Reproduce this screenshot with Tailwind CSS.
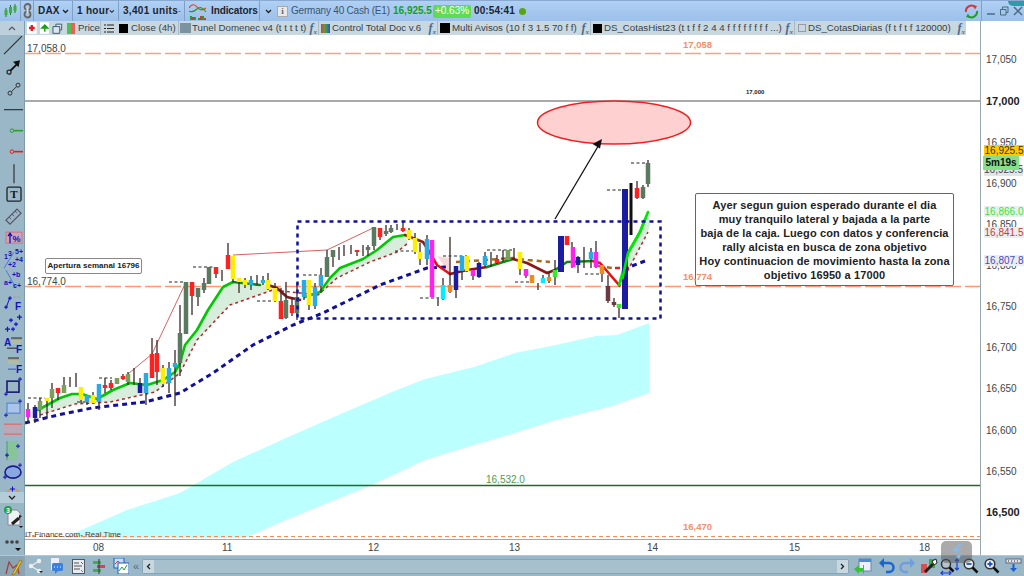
<!DOCTYPE html>
<html>
<head>
<meta charset="utf-8">
<script src="https://cdn.jsdelivr.net/npm/@tailwindcss/browser@4"></script>
</head>
<body class="bg-white">
<div class="relative w-[1024px] h-[576px] overflow-hidden flex flex-col bg-white font-['Liberation_Sans',Arial,sans-serif] text-[10px] leading-none text-[#333]">

  <!-- top bar -->
  <div class="relative h-[21px] shrink-0 flex items-center bg-gradient-to-b from-[#b0d0f4] to-[#9cc0ea] border-t border-[#8aa9d0] text-[#1c2530] whitespace-nowrap">
    <div class="w-[21px] h-full flex items-center justify-center border-r border-[#7f9fc4]">
      <svg width="13" height="14" viewBox="0 0 13 14"><path d="M2 4v9M6.500 1v10M11 0v9" stroke="#1f7a2c"/><path d="M2 6v5M6.500 3v6M11 2v5" stroke="#3fae3f" stroke-width="3"/></svg>
    </div>
    <div class="w-[13px] h-full flex items-center justify-center border-r border-[#7f9fc4]">
      <svg width="9" height="16" viewBox="0 0 9 16"><circle cx="4.500" cy="4" r="3" fill="none" stroke="#666" stroke-width="1.800"/><circle cx="4.500" cy="11.500" r="3" fill="none" stroke="#666" stroke-width="1.800"/><path d="M4.500 5v5" stroke="#ddd" stroke-width="2"/></svg>
    </div>
    <div class="w-[39px] h-full flex items-center justify-between pl-[4px] pr-[3px] border-r border-[#7f9fc4]"><b class="tracking-[0.2px]">DAX</b><svg width="7" height="5" viewBox="0 0 7 5"><path d="M1 1l2.500 2.500L6 1" fill="none" stroke="#222" stroke-width="1.300"/></svg></div>
    <div class="w-[46px] h-full flex items-center justify-between pl-[4px] pr-[3px] border-r border-[#7f9fc4]"><b class="tracking-[0.3px]">1 hour</b><svg width="7" height="5" viewBox="0 0 7 5"><path d="M1 1l2.500 2.500L6 1" fill="none" stroke="#222" stroke-width="1.300"/></svg></div>
    <div class="w-[66px] h-full flex items-center justify-between pl-[4px] pr-[3px] border-r border-[#7f9fc4]"><b class="tracking-[0.3px]">3,401 units</b><svg width="7" height="5" viewBox="0 0 7 5"><path d="M1 1l2.500 2.500L6 1" fill="none" stroke="#222" stroke-width="1.300"/></svg></div>
    <div class="w-[75px] h-full flex items-center gap-[4px] pl-[4px] border-r border-[#7f9fc4]">
      <svg width="18" height="17" viewBox="0 0 18 17"><path d="M0 5q4-6 8-1t9 1" fill="none" stroke="#e23a2a" stroke-width="1.200"/><path d="M0 8q4 2 8-2t9 3" fill="none" stroke="#2a9a2a" stroke-width="1.200"/><path d="M1 17v-4h2v4zM5 17v-3h2v3zM9 17v-2h2v2zM13 17v-4h2v4z" fill="#1f9f2f"/><path d="M3 17v-3h2v3zM11 17v-4h2v4zM15 17v-2h2v2z" fill="#e03030"/></svg>
      <b class="tracking-[-0.1px]">Indicators</b>
    </div>
    <div class="w-[16px] h-full flex items-center justify-center"><svg width="7" height="5" viewBox="0 0 7 5"><path d="M1 1l2.500 2.500L6 1" fill="none" stroke="#222" stroke-width="1.300"/></svg></div>
    <div class="w-[11px] h-[11px] ml-[1px] flex items-center justify-center bg-[#e8e8e8] border border-[#aaa] text-[#666] font-bold font-['Liberation_Serif',serif] text-[9px]">i</div>
    <span class="ml-[3px] text-[#3a5570] tracking-[-0.2px] w-[102px] whitespace-nowrap">Germany 40 Cash (E1)</span>
    <b class="text-[#17a017] w-[40px]">16,925.5</b>
    <span class="w-[38px] h-[13px] bg-[#5fdc55] rounded-[2px] text-white flex items-center justify-center">+0.63%</span>
    <b class="ml-[3px] tracking-[0.1px] w-[44px]">00:54:41</b>
    <span class="ml-[1px] w-[7px] h-[7px] rounded-full bg-[#5aa50f]"></span>
    <div class="absolute right-[43px] top-0 h-full w-[19px] flex items-center justify-center">
      <svg width="15" height="15" viewBox="0 0 15 15"><path d="M2 8a5.500 5.500 0 0 1 9-5" fill="none" stroke="#e03030" stroke-width="2"/><path d="M9 1l4 1-2 3.500z" fill="#e03030"/><path d="M13 7a5.500 5.500 0 0 1-9 5" fill="none" stroke="#1fa01f" stroke-width="2"/><path d="M6 14l-4-1 2-3.500z" fill="#1fa01f"/></svg>
    </div>
    <div class="absolute right-0 top-0 h-full w-[43px] flex items-center gap-[3px] pl-[4px] border-l border-[#7f9fc4]">
      <svg width="10" height="10" viewBox="0 0 10 10"><path d="M1 8h8" stroke="#4a6a80" stroke-width="1.500"/></svg>
      <svg width="10" height="10" viewBox="0 0 10 10"><path d="M1.500 3.500h5.500v5.500h-5.500zM3.500 3V1h5.500v5.500h-2" fill="none" stroke="#4a6a80"/></svg>
      <svg width="12" height="12" viewBox="0 0 12 12"><path d="M2 2l8 8M10 2l-8 8" stroke="#4a6a80" stroke-width="1.500"/></svg>
    </div>
    <div class="absolute right-0 top-0 w-[16px] h-[5px] rounded-bl-[12px] bg-[#2f9aa8]"></div>
  </div>

  <!-- middle -->
  <div class="flex flex-1 min-h-0">
    <!-- left toolbar -->
    <div class="w-[25px] shrink-0 flex flex-col bg-[#9ab7c8] border-r border-[#7f9aab]">
      <div class="h-[14px] shrink-0 flex items-center justify-center bg-[#bcd0dc]"><svg width="8" height="5" viewBox="0 0 8 5"><path d="M1 4l3-3 3 3" fill="none" stroke="#556" stroke-width="1.200"/></svg></div>
      <div class="flex-1 min-h-0 flex flex-col items-center overflow-hidden [&>svg]:shrink-0">
        <svg width="22" height="21.300" viewBox="0 0 22 21"><path d="M3 19L21 1" stroke="#333" stroke-width="1.200"/></svg>
        <svg width="22" height="21.300" viewBox="0 0 22 21"><circle cx="8" cy="16" r="2" fill="none" stroke="#222" stroke-width="1.200"/><path d="M9.500 14.500l7-7" stroke="#111" stroke-width="2"/><path d="M19 4l-1.500 7-5.500-5.500z" fill="#111"/></svg>
        <svg width="22" height="21.300" viewBox="0 0 22 21"><circle cx="9" cy="15" r="2" fill="none" stroke="#333"/><circle cx="17" cy="7" r="2" fill="none" stroke="#333"/><path d="M10.500 13.500l5-5" stroke="#333"/></svg>
        <svg width="22" height="21.300" viewBox="0 0 22 21"><path d="M3 10.500h19" stroke="#333" stroke-width="1.200"/></svg>
        <svg width="22" height="21.300" viewBox="0 0 22 21"><circle cx="11" cy="10.500" r="1.800" fill="none" stroke="#2aa02a"/><path d="M13 10.500h9" stroke="#2aa02a" stroke-width="1.600"/></svg>
        <svg width="22" height="21.300" viewBox="0 0 22 21"><circle cx="11" cy="10.500" r="1.800" fill="none" stroke="#e02020"/><path d="M13 10.500h9" stroke="#e02020" stroke-width="1.600"/></svg>
        <svg width="22" height="21.300" viewBox="0 0 22 21"><path d="M13 1v19" stroke="#333" stroke-width="1.200"/></svg>
        <svg width="22" height="21.300" viewBox="0 0 22 21"><rect x="6" y="3" width="14" height="14" rx="1.500" fill="none" stroke="#222" stroke-width="1.300"/><text x="13" y="14" font-size="11" font-weight="700" text-anchor="middle" fill="#111" font-family="Liberation Serif">T</text></svg>
        <svg width="22" height="21.300" viewBox="0 0 22 21"><path d="M5 15L16 4l4 4L9 19z" fill="none" stroke="#556" stroke-width="1.200"/><path d="M8 12l2 2M11 9l2 2M14 6l2 2" stroke="#556"/></svg>
        <svg width="22" height="21.300" viewBox="0 0 22 21"><rect x="5" y="5" width="16" height="11" fill="#c8a8b8" stroke="#d87080"/><path d="M9 16V7M7 9l2-3 2 3" fill="none" stroke="#1212c0" stroke-width="1.300"/><text x="15.500" y="14.500" font-size="9" font-weight="700" text-anchor="middle" fill="#1212c0">%</text></svg>
        <svg width="22" height="21.300" viewBox="0 0 22 21"><path d="M3 20l10-16" stroke="#5577cc"/><text x="3" y="11" font-size="7" font-weight="700" fill="#1212c0">1</text><text x="7" y="8" font-size="7" font-weight="700" fill="#1212c0">3</text><text x="14" y="6" font-size="7" font-weight="700" fill="#1212c0">5+</text><text x="14" y="14" font-size="7" font-weight="700" fill="#1212c0">+4</text><text x="7" y="19" font-size="7" font-weight="700" fill="#1212c0">+2</text></svg>
        <svg width="22" height="21.300" viewBox="0 0 22 21"><path d="M5 1l10 18" stroke="#5577cc"/><text x="3" y="16" font-size="7" font-weight="700" fill="#1212c0">a+</text><text x="11" y="8" font-size="7" font-weight="700" fill="#1212c0">+b</text><text x="12" y="19" font-size="7" font-weight="700" fill="#1212c0">c+</text></svg>
        <svg width="22" height="21.300" viewBox="0 0 22 21"><path d="M5 17L9 6" stroke="#1212c0"/><path d="M12 6h7" stroke="#d88" stroke-dasharray="3 1"/><text x="14" y="19" font-size="10" font-weight="700" fill="#1212c0">F</text><path d="M3 16h4M5 14v4M7 7h4M9 5v4" stroke="#1212c0"/></svg>
        <svg width="22" height="21.300" viewBox="0 0 22 21"><path d="M4 17h5M6.500 14.500v5M8 8h4M10 6v4M13 12h4M15 10v4M16 5h5M18.500 2.500v5M10 17h4M12 15v4" stroke="#1212c0" stroke-width="1.200"/></svg>
        <svg width="22" height="21.300" viewBox="0 0 22 21"><text x="3" y="13" font-size="10" font-weight="700" fill="#1212c0">A</text><path d="M10 5h11" stroke="#666" stroke-width="2"/><path d="M10 8h10M10 10h10" stroke="#d8c060"/><path d="M6 15h10" stroke="#222"/><text x="15" y="20" font-size="10" font-weight="700" fill="#1212c0">F</text></svg>
        <svg width="22" height="21.300" viewBox="0 0 22 21"><path d="M7 4h11" stroke="#666" stroke-width="2"/><path d="M7 7h11M7 9h11" stroke="#d8c060"/><path d="M7 15h8" stroke="#3355cc"/><text x="15" y="19" font-size="10" font-weight="700" fill="#1212c0">F</text></svg>
        <svg width="22" height="21.300" viewBox="0 0 22 21"><rect x="6" y="5" width="12" height="11" fill="none" stroke="#1a1a70" stroke-width="1.600"/><path d="M3 18h4M5 16v4M17 3h4M19 1v4" stroke="#1212c0"/></svg>
        <svg width="22" height="21.300" viewBox="0 0 22 21"><rect x="6" y="6" width="13" height="10" fill="#a8c4e8" stroke="#4a7ae0"/><path d="M3 18h4M5 16v4M17 4h4M19 2v4" stroke="#1212c0"/></svg>
        <svg width="22" height="21.300" viewBox="0 0 22 21"><rect x="3" y="6" width="18" height="10" fill="#b8a8b8"/><path d="M3 6h18" stroke="#e06060"/><path d="M3 16h18" stroke="#e06060"/></svg>
        <svg width="22" height="21.300" viewBox="0 0 22 21"><rect x="6" y="1" width="11" height="19" fill="#86c49a"/><path d="M6 1v19" stroke="#4a9a6a"/><path d="M15 6h4M17 4v4M4 15h4M6 13v4" stroke="#1212c0"/></svg>
        <svg width="22" height="21.300" viewBox="0 0 22 21"><ellipse cx="12" cy="11" rx="8" ry="6" fill="#8aa8e0" stroke="#1a1a90" stroke-width="1.600"/><path d="M17 4h4M19 2v4M2 16h4M4 14v4" stroke="#1212c0"/></svg>
        <svg width="22" height="10" viewBox="0 0 22 10"><path d="M5 14a7 7 0 0 1 14 0" fill="none" stroke="#e09060" stroke-width="1.500"/><path d="M9 7h5M11.500 4.500v5" stroke="#1212c0"/></svg>
        <div class="h-[11px] w-full shrink-0 flex items-center justify-center bg-[#b4ccd8]"><svg width="8" height="5" viewBox="0 0 8 5"><path d="M1 1l3 3 3-3" fill="none" stroke="#222" stroke-width="1.300"/></svg></div>
        <svg class="mt-[1px]" width="24" height="26" viewBox="0 0 24 26"><path d="M8 6h9l3 3v12H8z" fill="#eef2f5" stroke="#889"/><circle cx="8" cy="6" r="4" fill="#1f9f3f"/><text x="8" y="9" font-size="7" font-weight="700" text-anchor="middle" fill="#fff">3</text><path d="M12 20l7-6" stroke="#222" stroke-width="3"/><path d="M19 11l3 1-3 3z" fill="#222"/><path d="M19 22l2 2 2-2z" fill="#111"/></svg>
        <svg class="mt-[8px]" width="24" height="13" viewBox="0 0 24 13"><circle cx="7" cy="4" r="1.800" fill="#444"/><circle cx="12" cy="4" r="1.800" fill="#444"/><circle cx="17" cy="4" r="1.800" fill="#444"/><path d="M15 10h6l-3 3z" fill="#111"/></svg>
      </div>
    </div>

    <!-- chart column -->
    <div class="flex-1 min-w-0 flex flex-col">
      <div class="h-[14px] shrink-0 flex items-center bg-white text-[#33424d] text-[9.7px] whitespace-nowrap">
        <div class="h-full w-[941px] flex items-center bg-[#c9d7df]">
          <div class="w-[76px] h-full flex items-center gap-[3px] pl-[2px] border-r border-[#a8bac6]">
            <svg width="10" height="12" viewBox="0 0 10 12"><rect width="10" height="12" fill="#fff"/><path d="M5 3v6M2 6h6" stroke="#e02020" stroke-width="2.500"/></svg>
            <svg width="10" height="12" viewBox="0 0 10 12"><rect width="10" height="12" fill="#fff"/><path d="M5 10V5M2 6l3-3 3 3z" stroke="#18a018" fill="#18a018" stroke-width="1.500"/></svg>
            <svg width="11" height="11" viewBox="0 0 11 11"><path d="M4 3V1h6v6H8M1 3.500h7v7H1z" fill="#dce6ec" stroke="#3a5a78"/></svg>
            <span class="ml-[1px] w-[8px] h-[11px] bg-gradient-to-r from-[#4fbf4f] from-50% to-[#e8605a] to-50% shrink-0"></span>
            <span>Price</span>
          </div>
          <div class="w-[78px] h-full flex items-center pl-[3px] border-r border-[#a8bac6]">
            <svg width="10" height="9" viewBox="0 0 10 9"><path d="M3 1h7M3 4.500h7M3 8h7M0 1h2M0 4.500h2M0 8h2" stroke="#222" stroke-width="1.200"/></svg>
            <span class="ml-[5px] w-[9px] h-[9px] bg-black shrink-0"></span>
            <span class="ml-[3px]">Close (4h)</span>
          </div>
          <div class="w-[140px] h-full flex items-center pl-[1px] pr-[1px] border-r border-[#a8bac6]">
            <span class="w-[11px] h-[10px] bg-[#7c939f] shrink-0"></span>
            <span class="ml-[1px] shrink-0">Tunel Domenec v4 (t t t t t)</span>
            <i class="ml-auto font-['Liberation_Serif',serif] font-bold text-[12px] text-[#456a94]">f<sub class="text-[7px]">x</sub></i>
          </div>
          <div class="w-[119px] h-full flex items-center pl-[2px] pr-[1px] border-r border-[#a8bac6]">
            <span class="w-[9px] h-[9px] bg-gradient-to-r from-[#c04040] via-[#40a040] to-[#4040c0] shrink-0"></span>
            <span class="ml-[2px] shrink-0">Control Total Doc v.6</span>
            <i class="ml-auto font-['Liberation_Serif',serif] font-bold text-[12px] text-[#456a94]">f<sub class="text-[7px]">x</sub></i>
          </div>
          <div class="w-[153px] h-full flex items-center pl-[2px] pr-[1px] border-r border-[#a8bac6]">
            <span class="w-[10px] h-[10px] bg-black shrink-0"></span>
            <span class="ml-[2px] shrink-0">Multi Avisos (10 f 3 1.5 70 f f)</span>
            <i class="ml-auto font-['Liberation_Serif',serif] font-bold text-[12px] text-[#456a94]">f<sub class="text-[7px]">x</sub></i>
          </div>
          <div class="w-[204px] h-full flex items-center pl-[2px] pr-[1px] border-r border-[#a8bac6]">
            <span class="w-[9px] h-[9px] bg-black shrink-0"></span>
            <span class="ml-[2px] shrink-0">DS_CotasHist23 (t t f f 2 4 4 f f f f f f f f ...)</span>
            <i class="ml-auto font-['Liberation_Serif',serif] font-bold text-[12px] text-[#456a94]">f<sub class="text-[7px]">x</sub></i>
          </div>
          <div class="flex-1 h-full flex items-center pl-[3px] pr-[1px]">
            <span class="w-[8px] h-[8px] border border-[#99a] shrink-0"></span>
            <span class="ml-[2px] shrink-0">DS_CotasDiarias (f t f t f 120000)</span>
            <i class="ml-auto font-['Liberation_Serif',serif] font-bold text-[12px] text-[#456a94]">f<sub class="text-[7px]">x</sub></i>
          </div>
        </div>
      </div>

      <!-- chart canvas -->
      <div class="relative flex-1 min-h-0 bg-white border-b border-[#9aa8b0]">
        <svg class="absolute inset-0" width="955" height="505" viewBox="25 35 955 505" fill="none">
          <polygon fill="#bcffff" points="70,535 127,510 180,493 233,462 286,438 343,413 392,392 425,379 474,367 515,353 556,345 596,336 617,335 649,323 649,393 609,407 556,420 515,433 474,445 425,460 372,485 335,500 286,520 245,538 62,538"/>
          <path d="M25 53.500H980" stroke="#f9a27c" stroke-width="1.500" stroke-dasharray="16 4"/>
          <path d="M25 101H980" stroke="#555"/>
          <path d="M25 286.500H980" stroke="#fb9a6c" stroke-width="1.500" stroke-dasharray="16 4"/>
          <path d="M25 485.500H980" stroke="#1a6f1a" stroke-width="1.500"/>
          <path d="M25 536.500H980" stroke="#f58a5c" stroke-dasharray="4 3"/>
          <ellipse cx="614" cy="122.500" rx="76.500" ry="21.500" fill="#ffd0d0" stroke="#f02020" stroke-width="1.500"/>
          <path d="M555 219L600 143" stroke="#111" stroke-width="1.300"/>
          <path d="M602 139l-9.500 5 7.500 4.500z" fill="#111"/>
          <!-- thin red trail -->
          <path d="M128 374L152 354L186 282M233 255L327 250L373 228" stroke="#d86060" stroke-width="1"/>
          <!-- shaded MA band -->
          <path d="M38 410L60 398L72 394L82 394L97 399L113 390L130 383L147 385L163 380L175 372L180 363L185 345L197 330L208 310L223 287L233 282L268 285L277 288L287 297L300 300L320 292L330 278L340 268L363 259L377 250L393 237L405 235L408 243L397 252L370 262L337 278L318 295L290 300L273 290L230 305L197 340L180 373L155 392L110 402L75 404L40 415Z" fill="#d8eedc"/>
          <path d="M619 285L628 253L648 212L650 225L648 232L627 272Z" fill="#d8eedc"/>
          <path d="M437 256L450 258L450 274Z" fill="#f8d8d8"/>
          <!-- red dashed lower -->
          <path d="M40 415L75 404L110 402L155 392L180 373L197 340L230 305L273 290L318 295L337 278L370 262L397 252L408 243M619 287L627 272L648 232" stroke="#b02a2a" stroke-width="1.500" stroke-dasharray="3 3"/>
          <!-- horizontal black dashes -->
          <path d="M28 398H45M77 402H88M99 378H112M169 282H185M193 267H213M257 301H273M303 275H320M395 251H413M420 298H437M443 256H467M487 250H513M515 282H533M585 274H600M607 190H623M631 163H647" stroke="#222" stroke-dasharray="3 2.500"/>
          <!-- navy dashed -->
          <path d="M25 423L58 415L92 408L145 402L180 393L213 373L253 345L293 325L323 313L380 285L427 268L447 267" stroke="#10109a" stroke-width="3" stroke-dasharray="5 4"/>
          <path d="M456 262L513 258L528 260L550 262M598 266L612 268" stroke="#a86a18" stroke-width="2.500" stroke-dasharray="5 4"/>
          <path d="M615 268H632" stroke="#e02020" stroke-width="2.500" stroke-dasharray="5 4"/>
          <path d="M632 266L645 261" stroke="#10109a" stroke-width="3" stroke-dasharray="5 4"/>
          <!-- MA coloured -->
          <g stroke-width="2.600" stroke-linejoin="round" stroke-linecap="round">
            <path stroke="#00c800" d="M38 410L60 398L72 394L82 394L97 399L113 390L130 383L147 385L163 380L175 372L180 363L185 345L197 330L208 310L223 287L233 282"/>
            <path stroke="#108a10" d="M233 282L260 285"/>
            <path stroke="#8a1515" d="M268 285L277 288L287 297L300 300"/>
            <path stroke="#00c800" d="M305 297L320 292L330 278L340 268L363 259L377 250L393 237L405 235"/>
            <path stroke="#8a2015" d="M405 235L423 242L430 253"/>
            <path stroke="#e81010" d="M430 253L437 265L450 274"/>
            <path stroke="#8a1515" d="M450 274L467 270L487 267"/>
            <path stroke="#108a10" d="M487 267L513 259"/>
            <path stroke="#8a1515" d="M513 259L527 263L547 273L555 270"/>
            <path stroke="#108a10" d="M555 270L567 262L593 261"/>
            <path stroke="#e81010" d="M593 261L600 263L619 285"/>
            <path stroke="#00e800" d="M619 285L628 253L640 232L648 212"/>
          </g>
          <!-- wicks -->
          <g stroke="#3a2a2a" stroke-width="1.300">
            <path d="M28 403V423M35 405V423M40 398V418M47 398V418M52 383V408M58 388V400M64 377V393M70 377V387M76 373V387M81 387V403M87 395V405M93 392V404M99 384V410M105 378V393M111 380V390M117 378V384M123 374V380M128 372V385M134 368V385M140 378V393M146 373V405M152 338V378M157 340V385M163 365V387M169 362V393M175 350V406M180 305V376M186 282V334M192 282V315M198 288V306M204 278V293M209 267V284M216 267V278M222 270V281M228 243V269M233 256V282M239 278V293M245 278V288M251 276V290M257 275V285M263 276V285M268 273V290M275 283V302M281 288V319M286 282V319M292 297V316M297 283V320M304 280V300M309 280V310M315 283V309M321 268V293M327 250V277M333 250V267M339 247V260M344 245V256M351 245V254M357 250V256M363 245V256M368 245V256M374 227V250M380 228V240M386 225V236M391 225V233M397 224V230M403 222V232M409 228V240M415 233V254M420 243V265M427 235V265M438 297V306M443 278V300M450 237V293M456 266V298M462 256V280M467 256V272M473 270V280M479 262V278M485 252V266M491 252V267M497 255V264M503 250V262M508 250V260M514 248V258M520 252V275M526 269V278M532 275V283M538 283V290M543 275V283M549 272V283M555 260V285M572 242V268M578 256V273M584 247V268M591 248V268M596 241V268M602 265V282M608 275V303M614 298V307M619 308V318M637 181V199M643 185V199M648 160V187" />
          </g>
          <!-- bodies -->
          <g stroke-width="4.500">
            <path stroke="#ff22ee" d="M28 409V417M432 240V297M526 269V276M573 247V267M596 252V267M473 270V276"/>
            <path stroke="#1c1ca0" d="M35 407V418M140 383V393M456 266V290M479 263V277M578 257V265"/>
            <path stroke="#7ba05b" d="M40 401V410M52 389V398M64 385V393M117 378V384M128 374V382M508 250V260"/>
            <path stroke="#ffee00" d="M47 398V401M81 387V400M93 395V403M163 368V384M233 256V279M239 278V282M245 280V285M268 280V289M275 288V301M309 280V305M409 230V239M415 238V252M420 252V259M467 256V271M520 252V269"/>
            <path stroke="#ff2020" d="M58 388V393M105 385V388M111 383V388M123 376V379M152 354V378M157 353V372M192 282V296M216 267V274M228 255V269M281 301V319M292 305V313M357 250V252M380 228V237M403 228V231M497 259V263M567 236V245M637 188V198"/>
            <path stroke="#29abe2" d="M87 395V402M99 384V402M146 373V393M169 368V383M175 363V367M251 280V285M263 280V283M304 280V297M315 287V306M321 275V286M427 239V259M462 256V271M485 256V265M591 252V259"/>
            <path stroke="#5a7a60" d="M180 333V363M186 282V334M198 288V297M204 283V290M209 267V284M286 300V318M297 297V313M327 257V277M333 250V257M368 247V250M374 227V246M386 231V234M391 228V232"/>
            <path stroke="#00eeff" d="M443 285V299M543 278V283"/>
            <path stroke="#f08a1c" d="M450 285V292M532 275V283M549 277V281M602 265V274"/>
            <path stroke="#33ee22" d="M555 270V277M619 304V308"/>
            <path stroke="#6b3a42" d="M608 286V301M614 302V305"/>
            <path stroke="#1c1ca0" stroke-width="6" d="M561 236V272M625 189V309"/>
            <path stroke="#5a7a60" d="M643 187V198M648 163V184"/>
          </g>
          <path d="M631 183V235" stroke="#111" stroke-width="3"/>
          <path d="M621 285L628 253L640 232L648 212" stroke="#00e800" stroke-width="2.600" stroke-linejoin="round" stroke-dasharray="0 6 60"/>
          <!-- dotted box -->
          <rect x="297.500" y="221.500" width="363" height="97" stroke="#10109a" stroke-width="2.500" stroke-dasharray="4 4"/>
        </svg>

        <!-- chart labels -->
        <span class="absolute left-[2px] top-[9px] text-[#444]">17,058.0</span>
        <span class="absolute left-[658px] top-[5px] font-bold text-[9.5px] text-[#f5906a]">17,058</span>
        <span class="absolute left-[721px] top-[54px] font-bold text-[6px] text-[#222]">17,000</span>
        <span class="absolute left-[2px] top-[242px] text-[#444]">16,774.0</span>
        <span class="absolute left-[461px] top-[440px] text-[#4f9a4f]">16,532.0</span>
        <span class="absolute left-[658px] top-[487px] font-bold text-[9.5px] text-[#f5906a]">16,470</span>
        <span class="absolute left-[0px] top-[496px] text-[8px] text-[#5a3a2a]">IT-Finance.com- Real Time</span>
        <div class="absolute left-[20px] top-[223px] w-[97px] h-[16px] bg-white border border-[#888] rounded-[2px] flex items-center justify-center font-bold text-[8px] text-[#222]">Apertura semanal 16796</div>
        <div class="absolute left-[670px] top-[158px] w-[259px] h-[93px] bg-white border border-[#666] rounded-[2px] flex flex-col justify-center text-center font-bold text-[11px] tracking-[0.12px] leading-[14px] text-[#222] whitespace-nowrap">
          <p>Ayer segun guion esperado durante el dia</p>
          <p>muy tranquilo lateral y bajada a la parte</p>
          <p>baja de la caja. Luego con datos y conferencia</p>
          <p>rally alcista en busca de zona objetivo</p>
          <p>Hoy continuacion de movimiento hasta la zona</p>
          <p>objetivo 16950 a 17000</p>
        </div>
        <span class="absolute left-[658px] top-[237px] font-bold text-[9.5px] text-[#f5906a]">16,774</span>
      </div>

      <!-- time axis -->
      <div class="relative h-[15px] shrink-0 bg-white text-[#444] text-[10px]">
        <span class="absolute left-[68px] top-[3px]">08</span>
        <span class="absolute left-[197px] top-[3px]">11</span>
        <span class="absolute left-[343px] top-[3px]">12</span>
        <span class="absolute left-[484px] top-[3px]">13</span>
        <span class="absolute left-[622px] top-[3px]">14</span>
        <span class="absolute left-[764px] top-[3px]">15</span>
        <span class="absolute left-[894px] top-[3px]">18</span>
      </div>
    </div>

    <!-- right axis -->
    <div class="relative w-[44px] shrink-0 bg-white border-l border-[#9aa8b0] text-[#444]">
      <span class="absolute left-[5px] top-[34px]">17,050</span>
      <b class="absolute left-[5px] top-[75px] text-[11px] text-[#222]">17,000</b>
      <span class="absolute left-[5px] top-[117px]">16,950</span>
      <span class="absolute left-[3px] top-[144px] w-[39px] h-[11px] bg-[#dfe5e8] text-center">16,925.5</span>
      <span class="absolute left-[5px] top-[158px]">16,900</span>
      <span class="absolute left-[5px] top-[199px]">16,850</span>
      <span class="absolute left-[5px] top-[240px]">16,800</span>
      <span class="absolute left-[5px] top-[281px]">16,750</span>
      <span class="absolute left-[5px] top-[322px]">16,700</span>
      <span class="absolute left-[5px] top-[363px]">16,650</span>
      <span class="absolute left-[5px] top-[405px]">16,600</span>
      <span class="absolute left-[5px] top-[446px]">16,550</span>
      <b class="absolute left-[5px] top-[486px] text-[11px] text-[#222]">16,500</b>
      <span class="absolute left-[3px] top-[124px] w-[40px] h-[11px] bg-[#ffc800] flex items-center justify-center text-[#333]">16,925.5</span>
      <b class="absolute left-[2px] top-[135px] w-[36px] h-[14px] bg-[#86e08a] flex items-center justify-center text-[#111] text-[10px]">5m19s</b>
      <span class="absolute left-[3px] top-[185px] w-[40px] h-[11px] bg-[#eaeef0] flex items-center justify-center text-[#33e833]">16,866.0</span>
      <span class="absolute left-[3px] top-[206px] w-[40px] h-[11px] bg-[#eaeef0] flex items-center justify-center text-[#c83a3a]">16,841.5</span>
      <span class="absolute left-[3px] top-[234px] w-[40px] h-[11px] bg-[#eaeef0] flex items-center justify-center text-[#4a4ac0]">16,807.8</span>
    </div>
  </div>

  <!-- bottom toolbar -->
  <div class="relative h-[21px] shrink-0 flex items-center bg-[#9ab7c8] border-t border-[#b4c8d4]">
    <div class="w-[25px] h-full flex items-center justify-center bg-[#8aa4b4]">
      <svg width="20" height="20" viewBox="0 0 20 20"><path d="M3 18L6 6l4 6 4-3 2 9" fill="none" stroke="#a04040" stroke-width="1.300"/><path d="M10 17l7-13 2 1-7 13-3 1z" fill="#f0c020" stroke="#806010" stroke-width=".6"/></svg>
    </div>
    <div class="w-[120px] flex items-center pl-[2px] gap-[4px]">
      <svg width="16" height="16" viewBox="0 0 16 16"><path d="M12 3L4 8l8 5" stroke="#eee" stroke-width="1.200" fill="none"/><circle cx="12" cy="3" r="2.200" fill="#eee"/><circle cx="4" cy="8" r="2.200" fill="#eee"/><circle cx="12" cy="13" r="2.200" fill="#eee"/><path d="M12 13h4l-2 2z" fill="#222"/></svg>
      <svg class="ml-[3px]" width="14" height="16" viewBox="0 0 14 16"><rect x="1" y="0" width="8" height="12" fill="#eef"/><rect x="2" y="5" width="11" height="8" rx="1.500" fill="#3a80e0"/><path d="M4 9h1M7 9h1M10 9h1" stroke="#fff"/><path d="M5 13v3l3-3z" fill="#3a80e0"/></svg>
      <svg class="ml-[4px]" width="13" height="15" viewBox="0 0 13 15"><rect x=".5" y=".5" width="12" height="14" fill="#e6ecef" stroke="#556"/><path d="M2 4h5M2 7h8M2 10h6" stroke="#555"/><path d="M9 3l2 2" stroke="#c04040"/><path d="M9 11l2 2" stroke="#40a040"/></svg>
      <svg class="ml-[3px]" width="14" height="15" viewBox="0 0 14 15"><path d="M1 2h8v3H1z" fill="#40b040"/><path d="M5 6h8v3H5z" fill="#e04040"/><path d="M1 10h8v3H1z" fill="#40b040"/><path d="M7 0v15" stroke="#333"/></svg>
      <svg class="ml-[3px]" width="16" height="16" viewBox="0 0 16 16"><rect x="1" y="0" width="10" height="10" fill="#cde" stroke="#1a60c0"/><rect x="5" y="5" width="11" height="11" fill="#fff" stroke="#1a60c0"/><path d="M6 13l3-4 2 3 3-5" fill="none" stroke="#20a040"/><path d="M2 6l3-3 2 2" fill="none" stroke="#d04040"/></svg>
      <span class="text-[11px] text-[#5a6a74]">«</span>
    </div>
    <div class="ml-[-3px] w-[707px] h-[15px] flex items-center justify-between rounded-[2px] bg-[#a6c0ce] border border-[#8aa4b4]">
      <span class="w-[11px] h-full bg-[#c8d8e0] flex items-center justify-center"><svg width="5" height="7" viewBox="0 0 5 7"><path d="M4 1L1.500 3.500 4 6" fill="none" stroke="#222" stroke-width="1.300"/></svg></span>
      <span class="w-[11px] h-full bg-[#c8d8e0] flex items-center justify-center"><svg width="5" height="7" viewBox="0 0 5 7"><path d="M1 1l2.500 2.500L1 6" fill="none" stroke="#222" stroke-width="1.300"/></svg></span>
    </div>
    <div class="flex items-center">
      <svg class="ml-[5px]" width="18" height="18" viewBox="0 0 18 18"><rect x="5" y="2" width="12" height="12" fill="#eef" stroke="#68a"/><rect x="5" y="2" width="12" height="3" fill="#4a8ad0"/><path d="M9 8v3h-4v-3L0 12l5 5v-3h4v3l1-1v-8z" fill="#38c038"/></svg>
      <svg class="ml-[5.500px]" width="17" height="16" viewBox="0 0 17 16"><path d="M3 5h8a4.500 4.500 0 0 1 0 9H8" fill="none" stroke="#1a66d0" stroke-width="2.500"/><path d="M6 0L1 5l5 5z" fill="#1a66d0"/></svg>
      <svg class="ml-[4px]" width="17" height="16" viewBox="0 0 17 16"><path d="M14 5H6a4.500 4.500 0 0 0 0 9h3" fill="none" stroke="#6f9ede" stroke-width="2.500"/><path d="M11 0l5 5-5 5z" fill="#6f9ede"/></svg>
      <svg class="ml-[5px]" width="17" height="17" viewBox="0 0 17 17"><rect x="0" y="6" width="6" height="9" fill="#d85050"/><rect x="8" y="1" width="6" height="9" fill="#38b038"/><path d="M4 14l8-8" stroke="#222" stroke-width="3"/><path d="M11 3l4-2 1 4-3 2z" fill="#fff" stroke="#222"/></svg>
      <svg class="ml-[2px]" width="19" height="17" viewBox="0 0 19 17"><circle cx="6" cy="6" r="4.500" fill="#b8c4cc" stroke="#333" stroke-width="1.500"/><path d="M9.500 9.500l4 4" stroke="#111" stroke-width="2.500"/><path d="M17 1v11M15 3l2-2 2 2M15 10l2 2 2-2M1 15h10M3 13l-2 2 2 2M9 13l2 2-2 2" fill="none" stroke="#1a40d0" stroke-width="1.200"/></svg>
      <svg class="ml-[4.500px]" width="16" height="16" viewBox="0 0 16 16"><circle cx="6" cy="6" r="4.800" fill="#e8eef2" stroke="#333" stroke-width="1.500"/><path d="M3.500 6h5" stroke="#2050d0" stroke-width="1.800"/><path d="M9.500 9.500l5 5" stroke="#111" stroke-width="2.500"/></svg>
      <svg class="ml-[5px]" width="16" height="16" viewBox="0 0 16 16"><circle cx="6" cy="6" r="4.800" fill="#e8eef2" stroke="#333" stroke-width="1.500"/><path d="M3.500 6h5M6 3.500v5" stroke="#2050d0" stroke-width="1.800"/><path d="M9.500 9.500l5 5" stroke="#111" stroke-width="2.500"/></svg>
      <svg class="ml-[4.500px]" width="17" height="16" viewBox="0 0 17 16"><rect x="1" y="1" width="15" height="4" fill="#dde6ec" stroke="#667"/><path d="M3 3h1M6 3h1M9 3h1M12 3h1" stroke="#222"/><path d="M8.500 6v5" stroke="#1a60d0" stroke-width="2"/><path d="M5 10h7l-3.500 4z" fill="#1a60d0"/></svg>
    </div>
    <div class="absolute left-[941px] top-[-15px] w-[31px] h-[22px] rounded-[5px] bg-[#555]/50 flex items-center justify-center">
      <svg width="16" height="18" viewBox="0 0 16 18"><path d="M10 1L3 8h4L4 12l9-6H9l4-5zM7 13l6-3-3 6z" fill="#8ab8e8"/></svg>
    </div>
  </div>
</div>
</body>
</html>
